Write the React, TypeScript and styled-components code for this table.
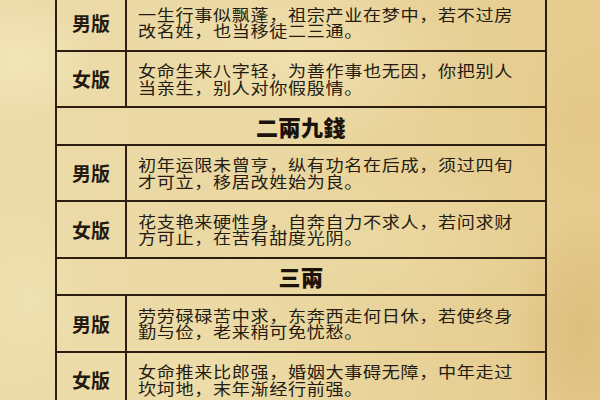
import styled, { createGlobalStyle } from "styled-components";

const GlobalStyle = createGlobalStyle`
  html, body {
    margin: 0;
    padding: 0;
    width: 600px;
    height: 400px;
    overflow: hidden;
  }
  body {
    font-family: "Noto Sans CJK SC", "Noto Sans", sans-serif;
    background-color: #e9d49d;
    background-image:
      radial-gradient(ellipse 80px 60px at 20px 60px, rgba(245, 233, 190, 0.7), transparent),
      radial-gradient(ellipse 60px 90px at 30px 300px, rgba(240, 228, 180, 0.6), transparent),
      radial-gradient(ellipse 70px 120px at 580px 330px, rgba(214, 178, 110, 0.55), transparent),
      radial-gradient(ellipse 60px 80px at 575px 120px, rgba(226, 196, 128, 0.5), transparent),
      radial-gradient(ellipse 160px 90px at 300px 60px, rgba(244, 230, 184, 0.55), transparent),
      radial-gradient(ellipse 180px 80px at 360px 240px, rgba(238, 222, 170, 0.5), transparent),
      radial-gradient(ellipse 140px 90px at 200px 370px, rgba(240, 226, 176, 0.5), transparent),
      linear-gradient(90deg, #ecdcab 0%, #ead7a1 45%, #e5cb8d 100%);
  }
`;

const Page = styled.div`
  width: 600px;
  height: 400px;
  padding-left: 55px;
  box-sizing: border-box;
`;

const Table = styled.div`
  width: 488px;
  margin-top: -7px;
  border: 2px solid #2d1e12;
  border-bottom: none;
  display: flex;
  flex-direction: column;
`;

const Row = styled.div`
  display: grid;
  grid-template-columns: 70px 1fr;
  height: 56.5px;
  box-sizing: border-box;
  border-bottom: 2px solid #2d1e12;
`;

const Label = styled.div`
  display: flex;
  align-items: center;
  justify-content: center;
  border-right: 2px solid #2d1e12;
  font-size: 19px;
  font-weight: 700;
  color: #23190f;
`;

const Verse = styled.div`
  display: flex;
  align-items: center;
  padding-left: 11px;
`;

/* the glyphs in the picture are wider than tall */
const VerseText = styled.p`
  margin: 0;
  width: 326px;
  font-size: 15.5px;
  line-height: 16.5px;
  letter-spacing: 0.53px;
  color: #241b12;
  transform: scaleX(1.17);
  transform-origin: left center;
`;

const Heading = styled.div`
  height: 37.5px;
  box-sizing: border-box;
  border-bottom: 2px solid #2d1e12;
  display: flex;
  align-items: center;
  justify-content: center;
  font-size: 22px;
  font-weight: 900;
  letter-spacing: 0.5px;
  color: #1a120b;
`;

type Item =
  | { kind: "heading"; title: string }
  | { kind: "row"; label: string; text: string };

const items: Item[] = [
  { kind: "row", label: "男版", text: "一生行事似飘蓬，祖宗产业在梦中，若不过房改名姓，也当移徒二三通。" },
  { kind: "row", label: "女版", text: "女命生来八字轻，为善作事也无因，你把别人当亲生，别人对你假殷情。" },
  { kind: "heading", title: "二兩九錢" },
  { kind: "row", label: "男版", text: "初年运限未曾亨，纵有功名在后成，须过四旬才可立，移居改姓始为良。" },
  { kind: "row", label: "女版", text: "花支艳来硬性身，自奔自力不求人，若问求财方可止，在苦有甜度光阴。" },
  { kind: "heading", title: "三兩" },
  { kind: "row", label: "男版", text: "劳劳碌碌苦中求，东奔西走何日休，若使终身勤与俭，老来稍可免忧愁。" },
  { kind: "row", label: "女版", text: "女命推来比郎强，婚姻大事碍无障，中年走过坎坷地，末年渐经行前强。" },
];

export default function App() {
  return (
    <>
      <GlobalStyle />
      <Page>
        <Table>
          {items.map((item, i) =>
            item.kind === "heading" ? (
              <Heading key={i}>{item.title}</Heading>
            ) : (
              <Row key={i}>
                <Label>{item.label}</Label>
                <Verse>
                  <VerseText>{item.text}</VerseText>
                </Verse>
              </Row>
            )
          )}
        </Table>
      </Page>
    </>
  );
}
